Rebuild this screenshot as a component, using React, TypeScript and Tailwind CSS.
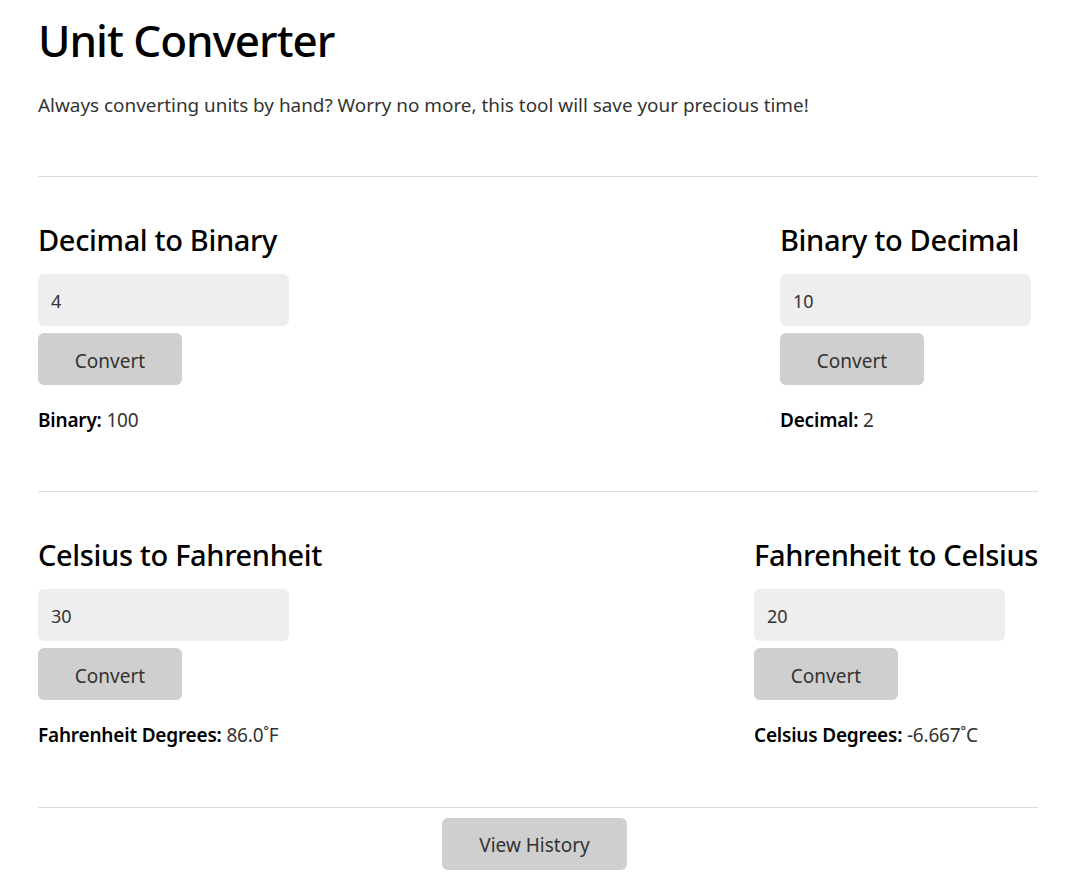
import React, { useState } from "react";

const font = { fontFamily: '"Noto Sans", "Open Sans", sans-serif' };

function Converter({
  title,
  initial,
  label,
  result,
}: {
  title: string;
  initial: string;
  label: string;
  result: string;
}) {
  const [val, setVal] = useState(initial);
  return (
    <div className="flex flex-col items-start">
      <h2 className="mt-[45px] text-[29px] leading-[36px] font-medium tracking-[-0.35px] text-black">{title}</h2>
      <input
        value={val}
        onChange={(e) => setVal(e.target.value)}
        className="mt-[16px] mr-[7px] h-[52px] w-[251px] rounded-[6px] bg-[#eeeeee] px-[13px] pt-[1px] text-[18px] text-[#333333] outline-none"
      />
      <button className="mt-[7px] mr-[7px] h-[52px] w-[144px] rounded-[6px] bg-[#cfcfcf] pt-[4px] text-[19px] text-[#333333]">
        Convert
      </button>
      <p className="mt-[21px] text-[19px] leading-[28px] tracking-[-0.2px] text-[#333333]">
        <span className="font-semibold text-black">{label}</span> {result}
      </p>
    </div>
  );
}

export default function App() {
  return (
    <div className="min-h-[881px] bg-white" style={font}>
      <div className="mx-[38px] w-[1000px]">
        <h1 className="pt-[12px] text-[44px] leading-[56px] font-medium tracking-[-1px] text-black">Unit Converter</h1>
        <p className="mt-[23px] text-[18.9px] leading-[28px] text-[#333333]">
          Always converting units by hand? Worry no more, this tool will save your precious time!
        </p>
        <hr className="mt-[57px] border-0 border-t border-[#dddddd]" />
        <div className="flex justify-between h-[314px]">
          <Converter title="Decimal to Binary" initial="4" label="Binary:" result="100" />
          <Converter title="Binary to Decimal" initial="10" label="Decimal:" result="2" />
        </div>
        <hr className="border-0 border-t border-[#dddddd]" />
        <div className="flex justify-between h-[315px]">
          <Converter title="Celsius to Fahrenheit" initial="30" label="Fahrenheit Degrees:" result="86.0˚F" />
          <Converter title="Fahrenheit to Celsius" initial="20" label="Celsius Degrees:" result="-6.667˚C" />
        </div>
        <hr className="border-0 border-t border-[#dddddd]" />
        <div className="flex justify-center">
          <button className="mt-[10px] mr-[7px] h-[52px] w-[185px] rounded-[6px] bg-[#cfcfcf] pt-[3px] text-[19px] text-[#333333]">
            View History
          </button>
        </div>
      </div>
    </div>
  );
}
